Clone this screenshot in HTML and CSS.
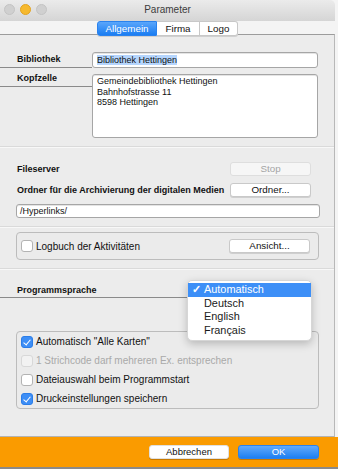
FILE: index.html
```html
<!DOCTYPE html>
<html lang="de">
  <head>
    <meta charset="UTF-8" />
    <title>Parameter</title>
    <link rel="stylesheet" href="styles.css">
  </head>
  <body>
    <div class="window">
      <div class="titlebar">
        <div class="lights">
          <span class="light"></span>
          <span class="light light-min"></span>
          <span class="light"></span>
        </div>
        <div class="title">Parameter</div>
      </div>

      <div class="tabs">
        <div class="tab active">Allgemein</div>
        <div class="tab">Firma</div>
        <div class="tab">Logo</div>
      </div>

      <div class="pane">
        <div class="section section-library">
          <div class="row">
            <div class="field-label label-single">Bibliothek</div>
            <div class="input input-library"><span class="selected">Bibliothek Hettingen</span></div>
          </div>
          <div class="row row-header">
            <div class="field-label label-multi">Kopfzelle</div>
            <div class="textarea">
              Gemeindebibliothek Hettingen<br>
              Bahnhofstrasse 11<br>
              8598 Hettingen
            </div>
          </div>
        </div>

        <div class="section section-server">
          <div class="line">
            <span class="bold">Fileserver</span>
            <button class="btn btn-disabled">Stop</button>
          </div>
          <div class="line">
            <span class="bold">Ordner für die Archivierung der digitalen Medien</span>
            <button class="btn">Ordner...</button>
          </div>
          <div class="input input-path">/Hyperlinks/</div>
        </div>

        <div class="section section-log">
          <div class="group group-log">
            <label class="check"><span class="box"></span>Logbuch der Aktivitäten</label>
            <button class="btn">Ansicht...</button>
          </div>
        </div>

        <div class="section section-lang">
          <div class="field-label label-lang">Programmsprache</div>

          <div class="group group-options">
            <label class="check"><span class="box checked"></span>Automatisch "Alle Karten"</label>
            <label class="check disabled"><span class="box"></span>1 Strichcode darf mehreren Ex. entsprechen</label>
            <label class="check"><span class="box"></span>Dateiauswahl beim Programmstart</label>
            <label class="check"><span class="box checked"></span>Druckeinstellungen speichern</label>
          </div>

          <div class="menu">
            <div class="menu-item active"><span class="tick">✓</span>Automatisch</div>
            <div class="menu-item">Deutsch</div>
            <div class="menu-item">English</div>
            <div class="menu-item">Français</div>
          </div>
        </div>
      </div>

      <div class="footer">
        <button class="btn btn-footer">Abbrechen</button>
        <button class="btn btn-footer btn-primary">OK</button>
      </div>
    </div>
  </body>
</html>
```

FILE: styles.css
```css
* {
  margin: 0;
  padding: 0;
  box-sizing: border-box;
}

body {
  font-family: "Liberation Sans", Arial, sans-serif;
  background: #f4f4f4;
  color: #111;
  width: 338px;
  height: 469px;
  overflow: hidden;
}

.window {
  width: 338px;
  height: 469px;
  display: flex;
  flex-direction: column;
}

/* title bar */

.titlebar {
  height: 22px;
  width: 335px;
  background: linear-gradient(#ebebeb, #d5d5d5);
  border-top-right-radius: 5px;
  position: relative;
  display: flex;
  align-items: center;
  justify-content: center;
}

.lights {
  position: absolute;
  left: 4px;
  top: 4px;
  display: flex;
  gap: 5px;
}

.light {
  width: 11px;
  height: 11px;
  border-radius: 50%;
  background: #d0d0d0;
  border: 1px solid #c4c4c4;
}

.light-min {
  background: #f6b92e;
  border-color: #e2a321;
}

.title {
  font-size: 10px;
  color: #3c3c3c;
  margin-top: -3px;
}

/* tabs */

.tabs {
  display: flex;
  justify-content: center;
  width: 335px;
  margin-bottom: -2px;
  position: relative;
  z-index: 2;
}

.tab {
  height: 15px;
  line-height: 14px;
  font-size: 9.8px;
  background: #fff;
  border: 1px solid #c8c8c8;
  border-left: none;
  text-align: center;
  box-shadow: 0 1px 0 #d0d0d0;
}

.tab:first-child {
  border-left: 1px solid #c8c8c8;
  border-radius: 3px 0 0 3px;
}

.tab:last-child {
  border-radius: 0 3px 3px 0;
}

.tab.active {
  width: 60px;
  background: linear-gradient(#5aa6fb, #1a7df2);
  border-color: #2a82ee;
  color: #fff;
}

.tab:nth-child(2) {
  width: 43px;
}

.tab:nth-child(3) {
  width: 38px;
}

.pane {
  width: 335px;
  flex: 1;
  background: #ececec;
  border-top: 1px solid #9c9c9c;
  border-right: 1px solid #b8b8b8;
  border-bottom: 1px solid #b3b3b3;
}

.section {
  border-bottom: 1px solid #dadada;
  box-shadow: 0 1px 0 #f8f8f8;
}

.bold {
  font-weight: bold;
  font-size: 9px;
}

/* labels with underline */

.field-label {
  width: 92px;
  padding-left: 17px;
  font-weight: bold;
  font-size: 9px;
  border-bottom: 1px solid #8a8a8a;
  flex-shrink: 0;
}

.label-single {
  height: 16px;
  line-height: 14px;
}

.label-multi {
  height: 13px;
  line-height: 9px;
}

.label-lang {
  width: 187px;
  height: 14px;
  line-height: 12px;
}

/* inputs */

.input,
.textarea {
  background: #fff;
  border: 1px solid #a6a6a6;
  border-radius: 3px;
  font-size: 9px;
  box-shadow: inset 0 1px 0 #e4e4e4;
}

.section-library {
  padding: 17px 0 8px;
}

.row {
  display: flex;
  align-items: flex-start;
}

.row-header {
  margin-top: 6px;
}

.input-library {
  width: 226px;
  height: 16px;
  line-height: 14px;
  padding-left: 4px;
}

.selected {
  background: #b5d5fd;
}

.textarea {
  width: 226px;
  height: 64px;
  padding: 1px 4px;
  line-height: 10.4px;
}

.section-server {
  padding: 15px 14px 8px 17px;
}

.line {
  display: flex;
  align-items: center;
  justify-content: space-between;
  padding-right: 9px;
  margin-bottom: 7px;
}

.input-path {
  margin-left: -1px;
  width: 304px;
  height: 14px;
  line-height: 12px;
  padding-left: 3px;
}

/* buttons */

.btn {
  font-family: inherit;
  width: 81px;
  height: 14px;
  font-size: 9.8px;
  line-height: 12px;
  background: #fff;
  border: 1px solid #c9c9c9;
  border-radius: 3px;
  box-shadow: 0 1px 0 #cfcfcf;
  color: #111;
}

.btn-disabled {
  background: #f6f6f6;
  color: #a5a5a5;
  border-color: #dedede;
  box-shadow: none;
}

/* groups and checkboxes */

.section-log {
  padding: 5px 0 8px 16px;
}

.group {
  width: 303px;
  border: 1px solid #bcbcbc;
  border-radius: 4px;
  background: #ebebeb;
}

.group-log {
  height: 28px;
  display: flex;
  align-items: center;
  justify-content: space-between;
  padding: 0 8px 0 4px;
}

.check {
  display: flex;
  align-items: center;
  font-size: 10px;
  color: #111;
}

.box {
  width: 12px;
  height: 12px;
  border: 1px solid #b3b3b3;
  border-radius: 3px;
  background: #fff;
  margin-right: 3px;
  position: relative;
}

.box.checked {
  background: #3d8ef6;
  border-color: #2b7de8;
}

.box.checked::after {
  content: "";
  position: absolute;
  left: 3px;
  top: 1px;
  width: 3px;
  height: 6px;
  border: solid #fff;
  border-width: 0 1.5px 1.5px 0;
  transform: rotate(40deg);
}

.check.disabled {
  color: #a9a9a9;
}

.check.disabled .box {
  background: #f2f2f2;
  border-color: #d8d8d8;
}

.section-lang {
  position: relative;
  padding-top: 15px;
  height: 167px;
  border-bottom: none;
  box-shadow: none;
}

.group-options {
  margin: 33px 0 0 16px;
  padding: 0 4px;
}

.group-options .check {
  height: 19px;
}

/* popup menu */

.menu {
  position: absolute;
  left: 187px;
  top: 11px;
  width: 125px;
  padding: 2px 0;
  background: #fff;
  border-radius: 5px;
  border: 1px solid #d6d6d6;
  box-shadow: 0 3px 8px rgba(0, 0, 0, 0.22);
  z-index: 3;
}

.menu-item {
  height: 13.6px;
  line-height: 13.6px;
  font-size: 10.9px;
  padding-left: 16px;
  color: #1a1a1a;
  position: relative;
}

.menu-item.active {
  background: #3d8ff7;
  color: #fff;
}

.tick {
  position: absolute;
  left: 4px;
  top: 0;
  font-weight: bold;
}

/* footer */

.footer {
  height: 33px;
  background: #fa9b00;
  border-bottom: 2px solid #8a8a8a;
  display: flex;
  justify-content: flex-end;
  align-items: center;
  gap: 9px;
  padding-right: 19px;
}

.btn-footer {
  width: 80px;
  font-size: 9.5px;
  border-color: #e0e0e0;
  box-shadow: 0 1px 0 #c87a00;
}

.btn-primary {
  width: 81px;
  background: linear-gradient(#62aafb, #1d7ff2);
  border-color: #2a82ee;
  color: #fff;
}
```
